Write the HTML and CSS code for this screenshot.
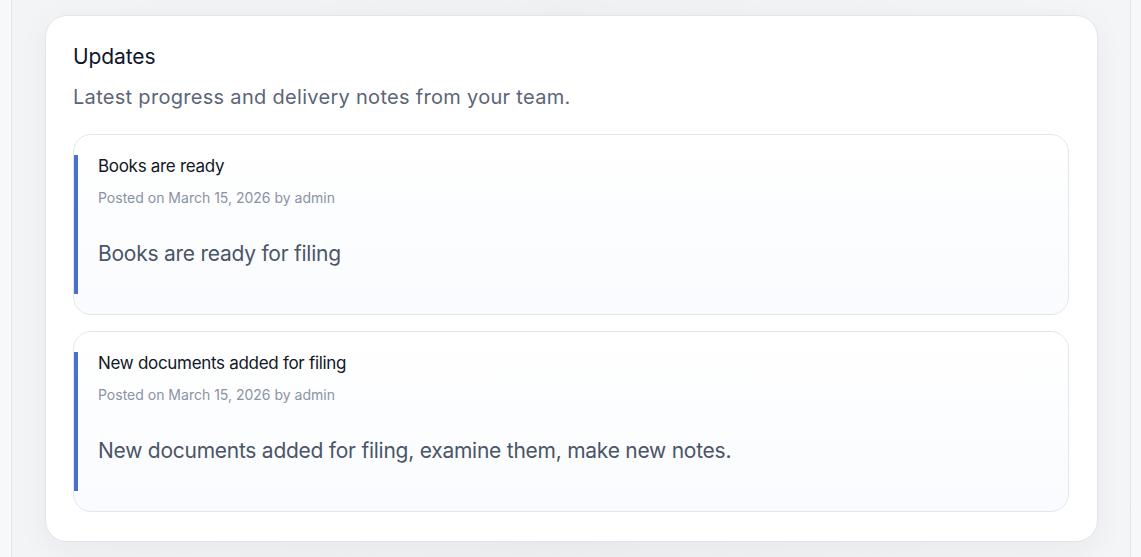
FILE: index.html
```html
<!DOCTYPE html>
<html lang="en">
<head>
<meta charset="utf-8">
<title>Updates</title>
<link rel="stylesheet" href="styles.css">
</head>
<body>
<main class="page">
  <section class="card">
    <h2 class="card-title">Updates</h2>
    <p class="card-sub">Latest progress and delivery notes from your team.</p>
    <div class="list">
      <article class="item">
        <div class="item-inner">
          <h3 class="item-title">Books are ready</h3>
          <p class="item-meta">Posted on March 15, 2026 by admin</p>
          <p class="item-body">Books are ready for filing</p>
        </div>
      </article>
      <article class="item">
        <div class="item-inner">
          <h3 class="item-title">New documents added for filing</h3>
          <p class="item-meta">Posted on March 15, 2026 by admin</p>
          <p class="item-body">New documents added for filing, examine them, make new notes.</p>
        </div>
      </article>
    </div>
  </section>
</main>
</body>
</html>
```
FILE: styles.css
```css
* { box-sizing: border-box; }
html, body { margin: 0; padding: 0; }
body {
  background: #f7f8f9;
  font-family: Inter, "Noto Sans", sans-serif;
  height: 557px;
  overflow: hidden;
}
.page {
  margin: 0 10px 0 11px;
  border-left: 1px solid #e3e7ec;
  border-right: 1px solid #e3e7ec;
  background: linear-gradient(90deg, #f3f4f6 0%, #f0f1f3 50%, #f4f5f7 100%);
  padding: 15px 32px 40px 33px;
  min-height: 557px;
}
.card {
  background: #fff;
  border: 1px solid #e2e6ec;
  border-radius: 22px;
  padding: 28px 28px 29px 27px;
  box-shadow: 0 8px 30px rgba(30, 40, 60, 0.05);
}
.card-title {
  margin: 0;
  font-size: 21px;
  line-height: 26px;
  font-weight: 400;
  color: #0f172a;
  letter-spacing: -0.1px;
}
.card-sub {
  margin: 13px 0 0;
  font-size: 20px;
  line-height: 28px;
  color: #5b6577;
  letter-spacing: 0.3px;
}
.list {
  margin-top: 23px;
  display: flex;
  flex-direction: column;
  gap: 16px;
}
.item {
  border: 1px solid #e2e7ef;
  border-radius: 18px;
  background: linear-gradient(180deg, #ffffff 0%, #f9fbfe 100%);
  padding: 20px 20px 20px 0;
}
.item-inner {
  border-left: 4px solid #4a6fcf;
  padding-left: 20px;
}
.item-title {
  margin: 0;
  font-size: 17px;
  line-height: 22px;
  font-weight: 400;
  color: #111827;
  letter-spacing: -0.3px;
}
.item-meta {
  margin: 11px 0 0;
  font-size: 14px;
  line-height: 20px;
  color: #8a93a3;
  letter-spacing: 0;
}
.item-body {
  margin: 31px 0 0;
  padding-bottom: 25px;
  font-size: 21px;
  line-height: 30px;
  color: #4b5567;
  letter-spacing: -0.25px;
}
```
